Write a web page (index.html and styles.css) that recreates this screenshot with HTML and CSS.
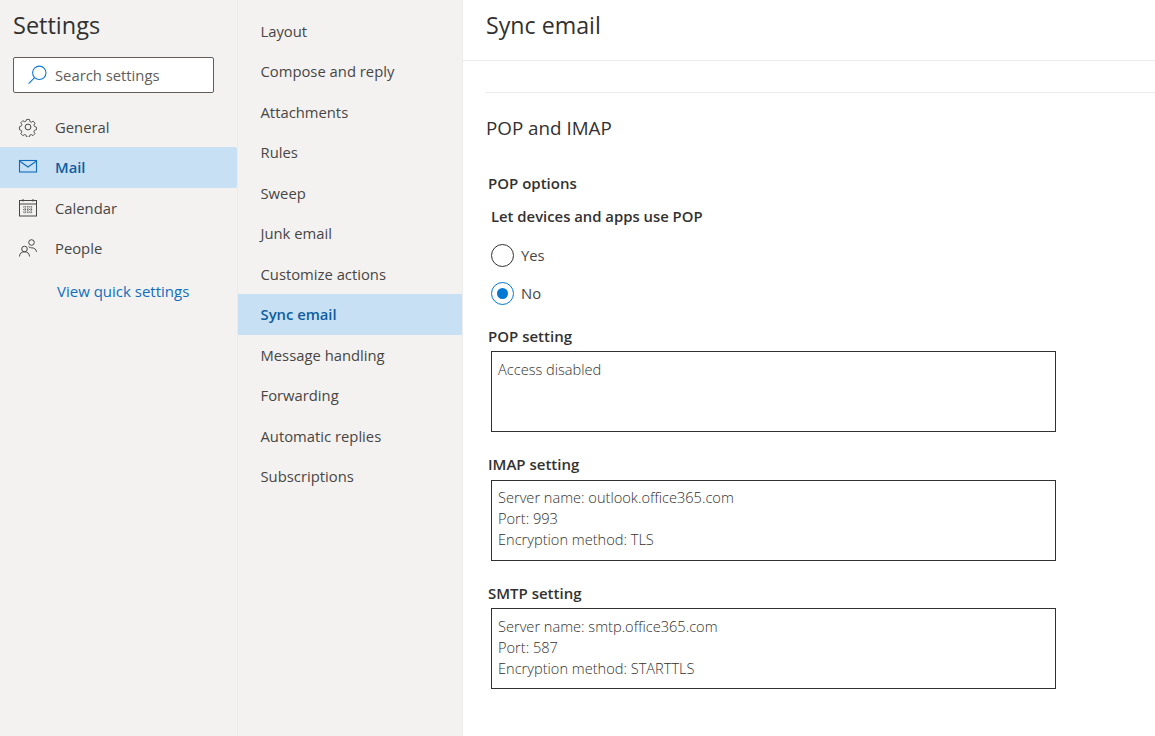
FILE: index.html
```html
<!DOCTYPE html>
<html lang="en">
<head>
<meta charset="utf-8">
<title>Settings</title>
<link rel="stylesheet" href="styles.css">
</head>
<body>
<div class="app">
  <nav class="side">
    <h1 class="side-title">Settings</h1>
    <div class="search">
      <svg class="search-icon" width="20" height="20" viewBox="0 0 20 20" fill="none" stroke="#0f78d4" stroke-width="1.1"><circle cx="11.3" cy="7.800" r="6.700"/><path d="M6.600 12.600 .6 18.600"/></svg>
      <span>Search settings</span>
    </div>
    <ul class="cats">
      <li class="cat">
        <svg width="20" height="20" viewBox="0 0 20 20" fill="none" stroke="#484644" stroke-width="1"><circle cx="10" cy="10" r="2.9"/><path d="M8.4 1.6h3.2l.5 2.4 1.5.7 2.2-1.2 2.1 2.3-1.3 2 .5 1.5 2.3.9v2.8l-2.3.8-.6 1.6 1.2 2-2.1 2.2-2.1-1.2-1.5.6-.7 2.3H8.4l-.6-2.3-1.5-.6-2.1 1.2-2.2-2.2 1.2-2-.6-1.6-2.1-.8V9.7l2.2-.9.5-1.5-1.2-2 2.2-2.3 2.1 1.2 1.5-.7z" transform="translate(1 1) scale(.9)"/></svg>
        <span>General</span>
      </li>
      <li class="cat cat-on">
        <svg width="20" height="20" viewBox="0 0 20 20" fill="none" stroke="#0f6cbd" stroke-width="1.1"><rect x="1.5" y="3.5" width="17" height="11.500"/><path d="m1.500 4 8.500 6 8.500-6"/></svg>
        <span>Mail</span>
      </li>
      <li class="cat">
        <svg width="20" height="20" viewBox="0 0 20 20" fill="none" stroke="#484644" stroke-width="1"><rect x="1.500" y="2.500" width="17" height="15.500"/><path d="M1.500 6h17M5 1v2.500M15 1v2.500"/><path d="M5 9h10M5 11.500h10M5 14h10M7 8v8M10 8v8M13 8v8" stroke-width=".8" stroke-dasharray="1.200 .8"/></svg>
        <span>Calendar</span>
      </li>
      <li class="cat">
        <svg width="20" height="20" viewBox="0 0 20 20" fill="none" stroke="#484644" stroke-width="1"><circle cx="6.500" cy="11" r="2.800"/><circle cx="13.500" cy="4.500" r="2.800"/><path d="M1.500 18.500c0-3 2-4.700 5-4.700s5 1.700 5 4.700M10.500 8.500c.8 1 2 1.300 3 1.300 2.800 0 4.700 1.500 5 4"/></svg>
        <span>People</span>
      </li>
    </ul>
    <a class="quick" href="#">View quick settings</a>
  </nav>
  <nav class="sub">
    <ul class="subs">
      <li class="subitem">Layout</li>
      <li class="subitem">Compose and reply</li>
      <li class="subitem">Attachments</li>
      <li class="subitem">Rules</li>
      <li class="subitem">Sweep</li>
      <li class="subitem">Junk email</li>
      <li class="subitem">Customize actions</li>
      <li class="subitem subitem-on">Sync email</li>
      <li class="subitem">Message handling</li>
      <li class="subitem">Forwarding</li>
      <li class="subitem">Automatic replies</li>
      <li class="subitem">Subscriptions</li>
    </ul>
  </nav>
  <main class="main">
    <header class="head"><h2 class="head-title">Sync email</h2></header>
    <div class="body">
      <hr class="rule">
      <h3 class="section">POP and IMAP</h3>
      <div class="label label-pop">POP options</div>
      <div class="question">Let devices and apps use POP</div>
      <div class="radio radio-first"><span class="dot"></span><span>Yes</span></div>
      <div class="radio"><span class="dot dot-on"></span><span>No</span></div>
      <div class="label label-setting">POP setting</div>
      <div class="box box-pop">Access disabled</div>
      <div class="label label-next">IMAP setting</div>
      <div class="box box-imap">Server name: outlook.office365.com<br>Port: 993<br>Encryption method: TLS</div>
      <div class="label label-next">SMTP setting</div>
      <div class="box box-smtp">Server name: smtp.office365.com<br>Port: 587<br>Encryption method: STARTTLS</div>
    </div>
  </main>
</div>
</body>
</html>
```
FILE: styles.css
```css
* { box-sizing: border-box; }
html, body { margin: 0; height: 100%; overflow: hidden; }
body { font-family: "Open Sans", "Noto Sans", sans-serif; font-size: 14.8px; color: #323130; background: #fff; }
ul { list-style: none; margin: 0; padding: 0; }
h1, h2, h3 { margin: 0; font-weight: 400; }
.app { display: flex; height: 736px; }
.side { width: 238px; flex: none; background: #f3f2f1; border-right: 1px solid #edebe9; }
.side-title { font-size: 23.5px; line-height: 30px; padding: 10px 0 0 13px; font-weight: 500; }
.search { display: flex; align-items: center; margin: 17px 0 0 13px; width: 201px; height: 36px; background: #fff; border: 1px solid #605e5c; border-radius: 2px; padding-left: 14px; color: #605e5c; }
.search-icon { margin-right: 7px; }
.cats { margin-top: 13.5px; }
.cat { display: flex; align-items: center; height: 40.5px; padding-left: 18px; color: #484644; }
.cat span { margin-left: 17px; }
.cat-on { background: #c7e0f4; color: #0f5c9e; font-weight: 600; border-radius: 0 2px 2px 0; }
.quick { display: block; margin: 12.5px 0 0 57px; color: #106ebe; font-size: 15px; text-decoration: none; }
.sub { width: 225px; flex: none; background: #f3f2f1; border-right: 1px solid #edebe9; padding-top: 10.5px; }
.subitem { height: 40.5px; line-height: 40.5px; padding-left: 22.5px; color: #484644; }
.subitem-on { background: #c7e0f4; color: #0f5c9e; font-weight: 600; }
.main { flex: 1; min-width: 0; }
.head { height: 61px; border-bottom: 1px solid #edebe9; padding: 9px 0 0 23px; }
.head-title { font-size: 23.2px; line-height: 32px; font-weight: 500; }
.body { padding-left: 23px; }
.rule { margin: 31px 0 0; border: 0; border-top: 1px solid #edebe9; }
.section { font-size: 18.8px; line-height: 24px; margin-top: 23px; font-weight: 500; }
.label { font-weight: 600; line-height: 20px; margin-left: 2px; font-size: 15px; }
.label-pop { margin-top: 33px; }
.label-setting { margin-top: 21px; }
.label-next { margin-top: 22px; }
.question { font-weight: 600; font-size: 14.85px; line-height: 20px; margin: 13px 0 0 5px; }
.radio { display: flex; align-items: center; height: 24px; margin: 14px 0 0 5px; color: #484644; }
.radio-first { margin-top: 17px; }
.dot { width: 23px; height: 23px; border: 1px solid #323130; border-radius: 50%; margin-right: 7px; background: #fff; position: relative; }
.dot-on { border-color: #0078d4; }
.dot-on::after { content: ""; position: absolute; inset: 5px; border-radius: 50%; background: #0078d4; }
.box { width: 565px; height: 81px; margin-left: 5px; border: 1px solid #323130; padding: 6px; font-weight: 300; font-size: 14.6px; line-height: 21px; color: #323130; }
.box-pop { margin-top: 5px; padding-top: 7px; }
.box-imap { margin-top: 6px; }
.box-smtp { margin-top: 5px; padding-top: 7px; }
```
